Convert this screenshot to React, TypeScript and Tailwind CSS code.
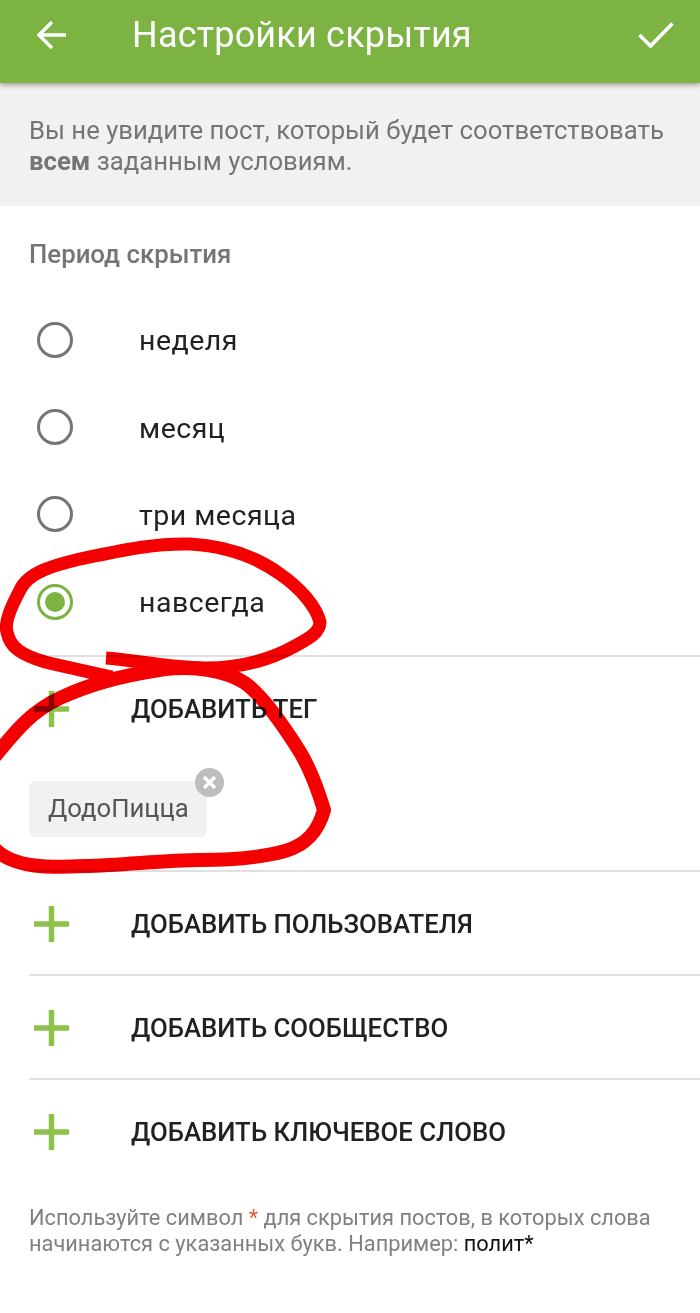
import React from "react";

function Radio({ checked }: { checked?: boolean }) {
  return (
    <span
      className={
        "flex h-[36px] w-[36px] items-center justify-center rounded-full border-[3px] " +
        (checked ? "border-[#7cb342]" : "border-[#757575]")
      }
    >
      {checked ? <span className="h-[20px] w-[20px] rounded-full bg-[#7cb342]" /> : null}
    </span>
  );
}

function RadioRow({ label, checked }: { label: string; checked?: boolean }) {
  return (
    <div className="flex h-[87.4px] items-center pl-[37px]">
      <Radio checked={checked} />
      <span className="ml-[66px] pt-[4px] text-[28.5px] tracking-[0.5px] text-[#212121]">{label}</span>
    </div>
  );
}

function Plus() {
  return (
    <svg width="35" height="36" viewBox="0 0 35 36" className="shrink-0">
      <path d="M17.5 0V36M0 18H35" stroke="#8bc34a" strokeWidth="5.5" fill="none" />
    </svg>
  );
}

function AddRow({ label }: { label: string }) {
  return (
    <div className="flex h-[102px] items-center pl-[34px] pt-[3px]">
      <Plus />
      <span className="ml-[62px] text-[25.75px] font-medium text-[#212121]">{label}</span>
    </div>
  );
}

export default function App() {
  return (
    <div className="relative h-[1313px] w-[700px] overflow-hidden bg-white font-['Roboto',sans-serif]">
      <header className="relative flex h-[83px] items-center bg-[#7cb342] pb-[14px] shadow-[0_2px_5px_rgba(0,0,0,0.35)]">
        <svg width="30" height="30" viewBox="0 0 30 30" className="ml-[37px] shrink-0">
          <path d="M29 15H3M15 2L2 15L15 28" stroke="#fff" strokeWidth="3.4" fill="none" />
        </svg>
        <h1 className="ml-[65px] flex-1 text-[36px] font-normal tracking-[0.2px] text-white">Настройки скрытия</h1>
        <svg width="36" height="26" viewBox="0 0 36 26" className="mr-[26px] shrink-0">
          <path d="M1.5 13L12.5 24L34.5 1.5" stroke="#fff" strokeWidth="3.6" fill="none" />
        </svg>
      </header>

      <div className="h-[123px] bg-[#f1f1f1] px-[29px] pt-[32px] text-[25.7px] leading-[31px] text-[#757575]">
        <p className="whitespace-nowrap">Вы не увидите пост, который будет соответствовать</p>
        <p>
          <b className="font-bold">всем</b> заданным условиям.
        </p>
      </div>

      <div className="pl-[29px] pt-[33px] text-[25.8px] font-medium leading-[30px] text-[#757575]">Период скрытия</div>

      <div className="mt-[27px]">
        <RadioRow label="неделя" />
        <RadioRow label="месяц" />
        <RadioRow label="три месяца" />
        <RadioRow label="навсегда" checked />
      </div>

      <div className="ml-[29px] mt-[9px] border-t-2 border-[#e0e0e0]">
        <div className="-ml-[29px]">
          <AddRow label="ДОБАВИТЬ ТЕГ" />
          <div className="h-[111px] pl-[29px] pt-[22px]">
            <div className="relative flex h-[56px] w-[178px] items-center rounded-[6px] bg-[#f1f1f1] pl-[19px] text-[25.7px] text-[#555]">
              ДодоПицца
              <span className="absolute -right-[17px] -top-[13px] flex h-[29px] w-[29px] items-center justify-center rounded-full bg-[#bdbdbd]">
                <svg width="15" height="15" viewBox="0 0 15 15">
                  <path d="M2 2L13 13M13 2L2 13" stroke="#fff" strokeWidth="3.4" fill="none" />
                </svg>
              </span>
            </div>
          </div>
        </div>
      </div>

      <div className="ml-[29px] border-t-2 border-[#e0e0e0]">
        <div className="-ml-[29px]"><AddRow label="ДОБАВИТЬ ПОЛЬЗОВАТЕЛЯ" /></div>
      </div>
      <div className="ml-[29px] border-t-2 border-[#e0e0e0]">
        <div className="-ml-[29px]"><AddRow label="ДОБАВИТЬ СООБЩЕСТВО" /></div>
      </div>
      <div className="ml-[29px] border-t-2 border-[#e0e0e0]">
        <div className="-ml-[29px]"><AddRow label="ДОБАВИТЬ КЛЮЧЕВОЕ СЛОВО" /></div>
      </div>

      <div className="px-[29px] pt-[23px] text-[21.8px] leading-[26px] text-[#808080]">
        <p className="whitespace-nowrap">
          Используйте символ <span className="text-[#d9603b]">*</span> для скрытия постов, в которых слова
        </p>
        <p>
          начинаются с указанных букв. Например: <span className="text-[#111]">полит*</span>
        </p>
      </div>

      <svg
        width="700"
        height="1313"
        viewBox="0 0 700 1313"
        className="pointer-events-none absolute left-0 top-0 mix-blend-multiply"
      >
        <path
          d="M106 658C135 660 170 668 205 668C240 668 270 660 295 646C310 638 320 632 320 622C316 606 300 588 280 574C255 556 225 546 190 544C150 543 115 552 80 559C55 565 28 572 20 590C12 605 4 622 7 632C10 648 22 655 45 662C70 668 90 672 112 677"
          stroke="#f50000"
          strokeWidth="13"
          fill="none"
          strokeLinejoin="round"
        />
        <path
          d="M-4 755C15 732 30 712 60 698C90 684 120 676 165 669C195 666 225 670 245 683C265 698 285 728 300 752C312 772 318 790 324 810C318 832 306 845 285 851C260 858 235 860 200 860C165 860 125 865 85 866C50 868 15 868 -4 850"
          stroke="#f50000"
          strokeWidth="14"
          fill="none"
          strokeLinecap="round"
          strokeLinejoin="round"
        />
      </svg>
    </div>
  );
}
